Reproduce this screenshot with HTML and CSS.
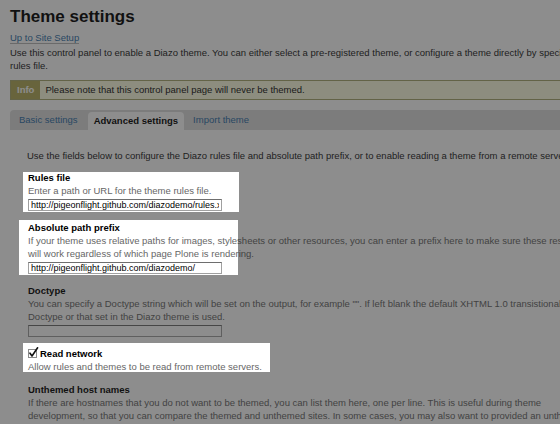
FILE: index.html
```html
<!DOCTYPE html>
<html>
<head>
<meta charset="utf-8">
<title>Theme settings</title>
<link rel="stylesheet" href="styles.css">
</head>
<body>
<div class="page">
  <h1 class="title">Theme settings</h1>
  <div class="up"><a href="#">Up to Site Setup</a></div>
  <p class="lead">Use this control panel to enable a Diazo theme. You can either select a pre-registered theme, or configure a theme directly by specifying the<br>rules file.</p>

  <dl class="msg">
    <dt class="msg-label">Info</dt>
    <dd class="msg-text">Please note that this control panel page will never be themed.</dd>
  </dl>

  <nav class="tabs">
    <a class="tab" href="#">Basic settings</a>
    <a class="tab active" href="#">Advanced settings</a>
    <a class="tab" href="#">Import theme</a>
  </nav>

  <p class="intro">Use the fields below to configure the Diazo rules file and absolute path prefix, or to enable reading a theme from a remote server.</p>

  <div class="field first">
    <div class="field-label">Rules file</div>
    <div class="help">Enter a path or URL for the theme rules file.</div>
    <input class="text-input" type="text" value="http://pigeonflight.github.com/diazodemo/rules.xml">
  </div>

  <div class="field">
    <div class="field-label">Absolute path prefix</div>
    <div class="help">If your theme uses relative paths for images, stylesheets or other resources, you can enter a prefix here to make sure these resources<br>will work regardless of which page Plone is rendering.</div>
    <input class="text-input" type="text" value="http://pigeonflight.github.com/diazodemo/">
  </div>

  <div class="field">
    <div class="field-label">Doctype</div>
    <div class="help">You can specify a Doctype string which will be set on the output, for example "". If left blank the default XHTML 1.0 transistional<br>Doctype or that set in the Diazo theme is used.</div>
    <input class="text-input" type="text" value="">
  </div>

  <div class="field">
    <div class="field-label check-row">
      <svg class="checkbox" width="11" height="11" viewBox="0 0 11 11"><rect x="0.5" y="2.5" width="8" height="8" fill="#fff" stroke="#8a8a8a"/><path d="M2 6.2 L4 9 L9.6 0.8" fill="none" stroke="#111" stroke-width="1.6" stroke-linecap="round" stroke-linejoin="round"/></svg>
      <span>Read network</span>
    </div>
    <div class="help">Allow rules and themes to be read from remote servers.</div>
  </div>

  <div class="field">
    <div class="field-label">Unthemed host names</div>
    <div class="help">If there are hostnames that you do not want to be themed, you can list them here, one per line. This is useful during theme<br>development, so that you can compare the themed and unthemed sites. In some cases, you may also want to provided an unthemed<br>host alias for content administration to be able to use 'vanilla' Plone.</div>
  </div>
</div>

<svg class="overlay" width="560" height="424" viewBox="0 0 560 424">
  <path fill="#212121" fill-opacity="0.514" fill-rule="evenodd" d="M0 0H560V424H0Z M23 172H239V212H23Z M19 220H238V275H19Z M23 343H270V372H23Z"/>
</svg>
</body>
</html>
```

FILE: styles.css
```css
html, body {
  margin: 0;
  padding: 0;
  height: 424px;
  overflow: hidden;
}

body {
  font-family: "Liberation Sans", Arial, Helvetica, sans-serif;
  font-size: 9.5px;
  line-height: 13px;
  color: #000;
  background: #fff;
}

.page {
  width: 780px;
  padding: 7px 10px 0;
}

.title {
  margin: 0;
  font-size: 17px;
  line-height: 20px;
  font-weight: bold;
  color: #000;
}

.up {
  margin-top: 4px;
}

.up a {
  color: #3071a9;
  text-decoration: none;
  border-bottom: 1px solid #b8b8b8;
}

.lead {
  margin: 2px 0 0;
  color: #1a1a1a;
  white-space: nowrap;
}

.msg {
  margin: 8px 0 0;
  display: flex;
  height: 20px;
  box-sizing: border-box;
  border: 1px solid #a8a870;
  background: #ffffe3;
  line-height: 18px;
}

.msg-label {
  background: #b3ac5a;
  color: #fff;
  font-weight: bold;
  padding: 0 6px 0 6px;
}

.msg-text {
  margin: 0;
  padding-left: 5px;
  color: #111;
}

.tabs {
  margin-top: 10px;
  display: flex;
  height: 20px;
  background: #dcdcdc;
  border-radius: 4px 0 0 0;
}

.tab {
  padding: 0 10px 0 9px;
  line-height: 20px;
  color: #3071a9;
  text-decoration: none;
}

.tab.active {
  margin-top: 2px;
  padding: 0 6px;
  line-height: 18px;
  background: #fff;
  color: #000;
  font-weight: bold;
  border-radius: 4px 4px 0 0;
}

.intro {
  margin: 19px 0 0 17px;
  white-space: nowrap;
  color: #1a1a1a;
}

.field {
  margin: 10px 0 0 18px;
}

.field.first {
  margin-top: 9px;
}

.field-label {
  font-weight: bold;
  color: #000;
}

.help {
  color: #666;
  white-space: nowrap;
}

.text-input {
  display: block;
  margin: 2px 0 0;
  width: 194px;
  height: 12px;
  box-sizing: border-box;
  padding: 0 2px;
  border: 1px solid #a0a0a0;
  border-top-color: #6e6e6e;
  background: #fff;
  font-family: "Liberation Sans", Arial, sans-serif;
  font-size: 9px;
  line-height: 10px;
  color: #000;
  outline: none;
}

.check-row {
  display: flex;
  align-items: center;
  gap: 1px;
}

.checkbox {
  display: block;
  margin-top: -3px;
}

.overlay {
  position: absolute;
  top: 0;
  left: 0;
  pointer-events: none;
}
```
